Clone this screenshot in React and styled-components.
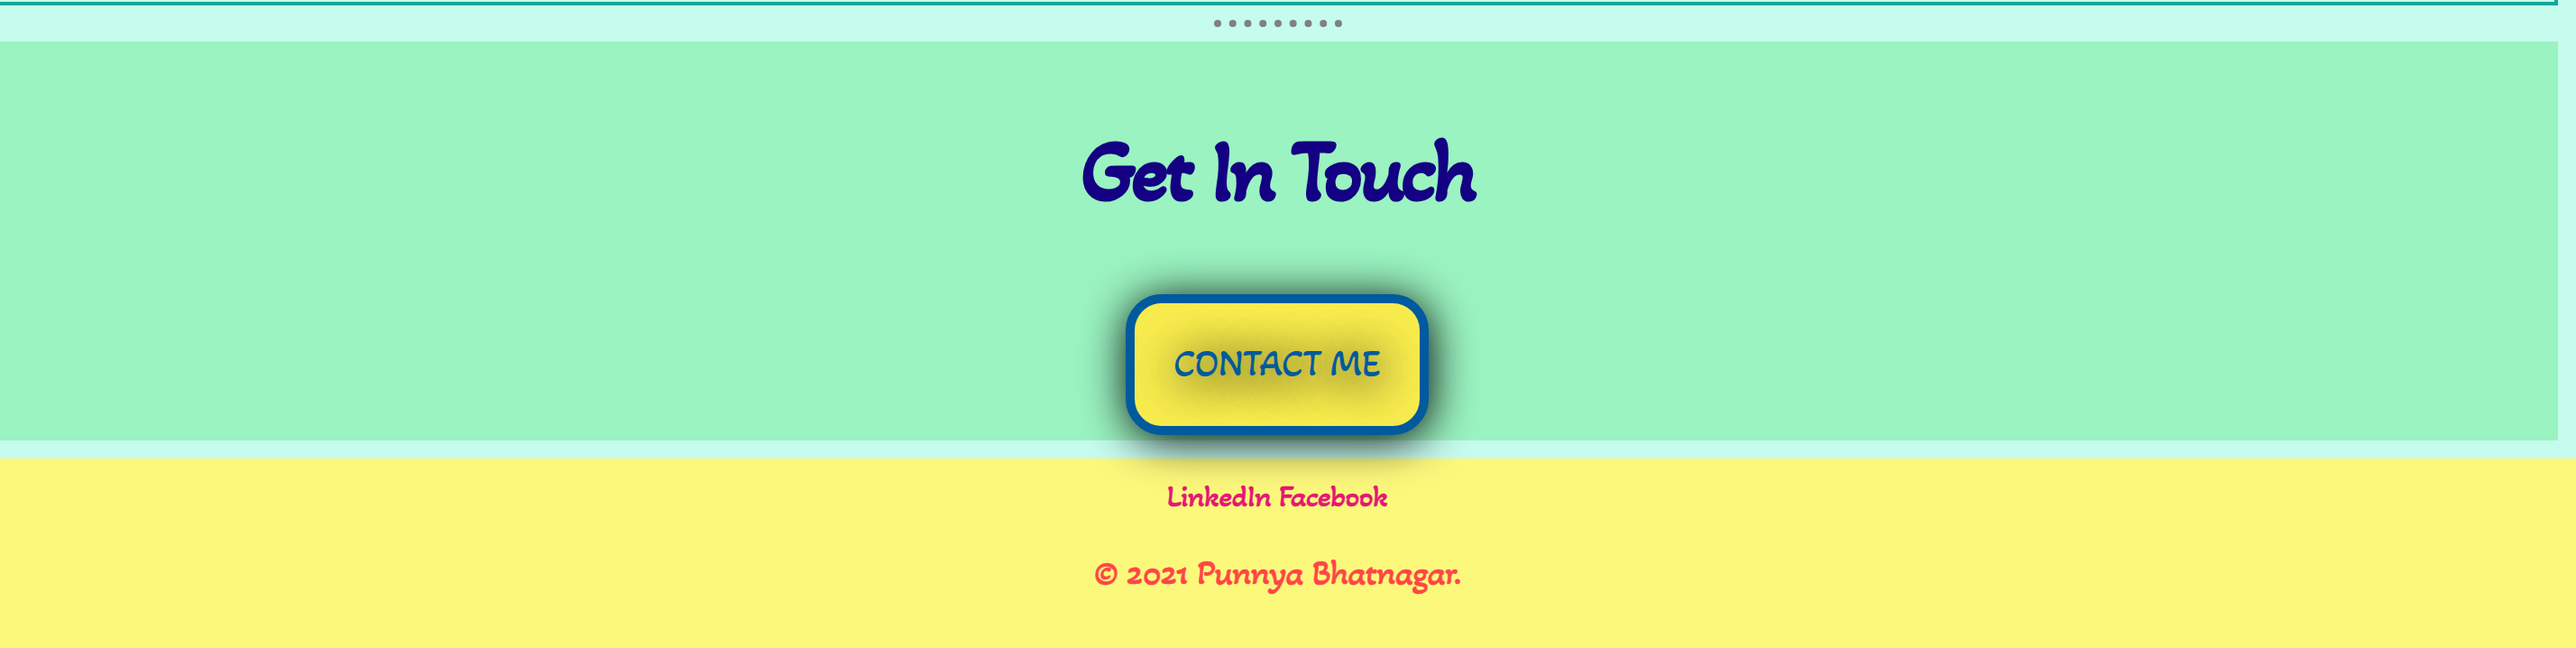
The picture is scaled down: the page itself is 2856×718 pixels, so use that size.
import React from "react";
import styled, { createGlobalStyle } from "styled-components";

const GlobalStyle = createGlobalStyle`
  * { box-sizing: border-box; }
  body {
    margin: 0;
    overflow: hidden;
    background: #c5fced;
    font-family: Redressed, "Akaya Kanadaka", Merienda, Lato, sans-serif;
    text-align: center;
  }
`;

const Page = styled.div`
  height: 718px;
  overflow: hidden;
`;

const Main = styled.main`
  width: 2836px;
`;

const PanelEdge = styled.div`
  height: 6px;
  border: solid #17a599;
  border-width: 0 4px 4px 0;
`;

const DottedRule = styled.hr`
  width: 142px;
  height: 8px;
  margin: 16px 0 16px 1346px;
  border: 0 dotted #808080;
  border-top-width: 8px;
`;

const Contact = styled.section`
  display: flex;
  flex-direction: column;
  align-items: center;
  height: 442px;
  background: #9af3c0;
`;

const Title = styled.h1`
  margin: 84px 4px 76px 0;
  font-size: 97px;
  line-height: 120px;
  font-weight: 700;
  letter-spacing: -4px;
  color: #140082;
  white-space: nowrap;
`;

const ContactButton = styled.a`
  position: relative;
  z-index: 1;
  display: flex;
  flex: none;
  align-items: center;
  justify-content: center;
  width: 336px;
  height: 156px;
  margin-right: 4px;
  border: 10px solid #005a9e;
  border-radius: 40px;
  background: #f7eb4e;
  box-shadow: 2px 5px 50px #000;
  color: #005a9e;
  font-size: 42px;
  line-height: 46px;
  padding-bottom: 2px;
  text-shadow: 2px 5px 50px #000, 2px 5px 50px rgba(0, 0, 0, 0.4);
  white-space: nowrap;
`;

const Footer = styled.footer`
  display: flex;
  flex-direction: column;
  align-items: center;
  height: 210px;
  margin-top: 20px;
  padding: 18px 24px 0 0;
  background: #fcf87c;
`;

const Links = styled.nav`
  display: flex;
  gap: 9px;
  height: 48px;
  line-height: 48px;
`;

const SocialLink = styled.a`
  color: #e31775;
  font-size: 35px;
  letter-spacing: -0.8px;
  -webkit-text-stroke: 0.5px currentColor;
`;

const Copyright = styled.p`
  margin: 36px 0 0;
  color: #ff4646;
  font-size: 40px;
  line-height: 48px;
  letter-spacing: -0.9px;
  -webkit-text-stroke: 0.5px currentColor;
  white-space: nowrap;
`;

export default function App() {
  return (
    <Page>
      <GlobalStyle />
      <Main>
        <PanelEdge />
        <DottedRule />
        <Contact>
          <Title>Get In Touch</Title>
          <ContactButton>CONTACT ME</ContactButton>
        </Contact>
      </Main>
      <Footer>
        <Links>
          <SocialLink>LinkedIn</SocialLink>
          <SocialLink>Facebook</SocialLink>
        </Links>
        <Copyright>© 2021 Punnya Bhatnagar.</Copyright>
      </Footer>
    </Page>
  );
}
